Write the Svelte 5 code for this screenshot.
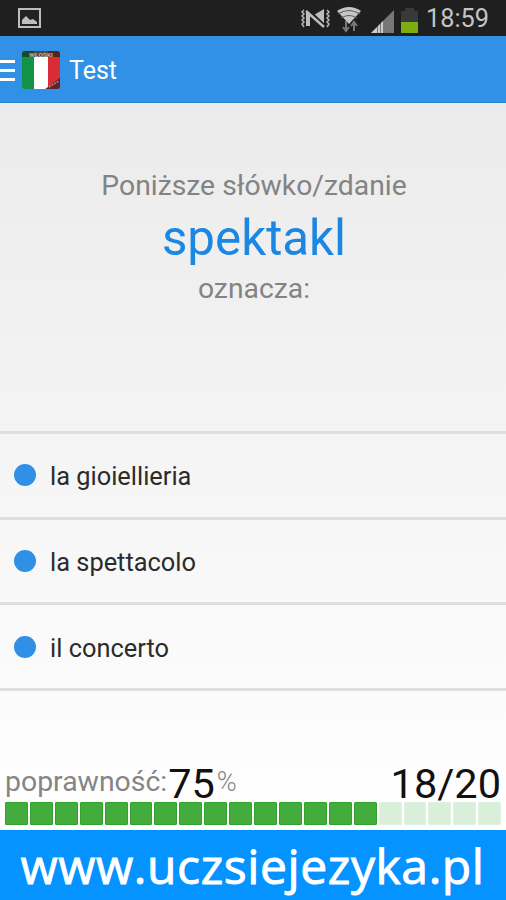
<script>
	const title = 'Test';
	const time = '18:59';
	const word = 'spektakl';
	const answers = ['la gioiellieria', 'la spettacolo', 'il concerto'];
	const total = 20;
	const current = 18;
	const percent = 75;

	const blocks = Array.from({ length: total }, (_, i) => i < (total * percent) / 100);
</script>

<div class="screen">
	<div class="status">
		<svg class="picture" width="26" height="24" viewBox="0 0 26 24">
			<rect x="2" y="3" width="21" height="18" fill="#222" stroke="#bdbdbd" stroke-width="2" />
			<path d="M5 18v-4l4-4 4 4 3-1 4 3v2z" fill="#bdbdbd" />
		</svg>
		<svg width="132" height="34" viewBox="0 0 132 34">
			<g fill="none" stroke="#b5b5b5" stroke-width="1.5">
				<path d="M4 9l-2 2 2 2-2 2 2 2-2 2 2 2-2 2 2 3" />
				<path d="M27 9l2 2-2 2 2 2-2 2 2 2-2 2 2 2-2 3" />
			</g>
			<path d="M6 12h4v13H6zM14 14l10-6v17z" fill="#bdbdbd" />
			<path d="M8 9l17 16" stroke="#1f1f1f" stroke-width="3" />
			<path d="M6 10l18 16" stroke="#bdbdbd" stroke-width="2.4" />
			<path d="M37 10Q49 2 61 10L49 23z" fill="#c6c6c6" />
			<path d="M38 13q11-7 22 0M41 17q8-5 16 0" fill="none" stroke="#555" stroke-width="1.2" />
			<path d="M46 20v9m-3-3l3 4 3-4M54 30v-9m-3 4l3-4 3 4" fill="none" stroke="#777" stroke-width="2" />
			<path d="M71 32L94 9v23z" fill="#777" />
			<path d="M71 32l6-6v6zM78 25l2-2v9h-2zM81 22l2-2v12h-2z" fill="#ccc" />
			<path d="M101 10h4V7h9v3h4v12h-17z" fill="#393939" />
			<path d="M101 21h17v11h-17z" fill="#7dac10" />
		</svg>
		<span class="time">{time}</span>
	</div>

	<header>
		<div class="menu"><i></i><i></i><i></i></div>
		<svg class="flag" width="40" height="40" viewBox="0 0 40 40">
			<clipPath id="round"><rect x="0" y="1" width="38" height="38" rx="3" /></clipPath>
			<g clip-path="url(#round)">
				<path d="M0 0h12v40H0z" fill="#129247" />
				<path d="M12 0h14v40H12z" fill="#fff" />
				<path d="M26 0h13v40H26z" fill="#d92d35" />
				<path d="M0 0h12v7H0z" fill="#174a2c" />
				<path d="M12 0h14v7H12z" fill="#4b4b48" />
				<path d="M26 0h13v7H26z" fill="#57231f" />
				<path d="M39 27v13H22z" fill="#60242a" />
				<path d="M27 37l10-6" stroke="#b98c89" stroke-width="1.5" stroke-dasharray="2 1" />
				<text x="7" y="6.5" textLength="24" lengthAdjust="spacingAndGlyphs">WŁOSKI</text>
			</g>
		</svg>
		<h1>{title}</h1>
	</header>

	<main>
		<section class="question">
			<p class="hint">Poniższe słówko/zdanie</p>
			<p class="word">{word}</p>
			<p class="hint">oznacza:</p>
		</section>

		<ul>
			{#each answers as answer}
				<li><span class="dot"></span><span>{answer}</span></li>
			{/each}
		</ul>

		<section class="score">
			<div class="numbers">
				<span class="label">poprawność:</span>
				<span class="big">{percent}</span>
				<span class="unit">%</span>
				<span class="big count">{current}/{total}</span>
			</div>
			<div class="bar">
				{#each blocks as done}
					<i class:done></i>
				{/each}
			</div>
		</section>
	</main>

	<footer>
		<span>www.uczsiejezyka.pl</span>
	</footer>
</div>

<style>
	:global(body) {
		margin: 0;
	}
	.screen {
		width: 506px;
		height: 900px;
		display: flex;
		flex-direction: column;
		overflow: hidden;
		font-family: Roboto, sans-serif;
	}
	.status {
		height: 36px;
		flex: none;
		box-sizing: border-box;
		padding: 0 17px;
		display: flex;
		align-items: center;
		background: #1f1f1f;
	}
	.picture {
		margin-right: auto;
	}
	.time {
		width: 63px;
		margin-left: -6px;
		padding-top: 1px;
		font-size: 25.3px;
		line-height: 36px;
		color: #c4c4c4;
		white-space: nowrap;
	}
	header {
		height: 67px;
		flex: none;
		box-sizing: border-box;
		border-bottom: 1px solid #2b82cc;
		display: flex;
		align-items: center;
		background: #3191e6;
	}
	.menu {
		width: 15px;
		margin-top: 2px;
		display: flex;
		flex-direction: column;
		gap: 6px;
	}
	.menu i {
		height: 3px;
		background: #fff;
	}
	.flag {
		margin: 1px 7px 0;
	}
	.flag text {
		font-size: 6px;
		font-weight: bold;
		fill: #b5b5b0;
	}
	h1 {
		margin: 2px 0 0;
		font-size: 25px;
		font-weight: 400;
		color: #fff;
	}
	main {
		flex: 1;
		display: flex;
		flex-direction: column;
		background: linear-gradient(#ebebeb, #fff);
	}
	.question {
		height: 328px;
		box-sizing: border-box;
		padding: 65px 0 0 2px;
		text-align: center;
	}
	p {
		margin: 0;
	}
	.hint {
		font-size: 28.3px;
		line-height: 36px;
		color: #838383;
	}
	.word {
		padding-top: 1px;
		font-size: 49.3px;
		line-height: 66px;
		color: #1b87e2;
	}
	ul {
		margin: 0;
		padding: 0;
		list-style: none;
		border-top: 3px solid #dedede;
	}
	li {
		height: 85.7px;
		box-sizing: border-box;
		padding-left: 14px;
		display: flex;
		align-items: center;
		gap: 14px;
		border-bottom: 3px solid #dedede;
		font-size: 25.4px;
		color: #2b2b2b;
	}
	li span:last-child {
		padding-top: 2px;
	}
	.dot {
		width: 22px;
		height: 22px;
		border-radius: 50%;
		background: #3090e5;
	}
	.score {
		margin-top: auto;
		padding: 0 5px 5px;
	}
	.numbers {
		display: flex;
		align-items: flex-start;
		line-height: 36px;
	}
	.label,
	.unit {
		padding-top: 1px;
		font-size: 28.4px;
		color: #858585;
	}
	.unit {
		margin-left: 2px;
		font-size: 27px;
		font-weight: 300;
	}
	.big {
		margin-left: 1px;
		padding-top: 3px;
		font-size: 41.5px;
		color: #111;
	}
	.count {
		margin-left: auto;
	}
	.bar {
		display: flex;
		gap: 2px;
	}
	.bar i {
		flex: 1;
		box-sizing: border-box;
		height: 23px;
		border: 1px solid #e0f2df;
		border-radius: 1px;
		background: #daefd9;
	}
	.bar .done {
		border-color: #2da52a;
		background: #43ac3c;
	}
	footer {
		height: 70px;
		flex: none;
		display: flex;
		align-items: center;
		justify-content: center;
		background: #0593ff;
		color: #fff;
		font-family: 'Open Sans', sans-serif;
		font-size: 48px;
		letter-spacing: 0.6px;
		-webkit-text-stroke: 0.9px #fff;
	}
	footer span {
		margin-left: -1px;
	}
</style>
